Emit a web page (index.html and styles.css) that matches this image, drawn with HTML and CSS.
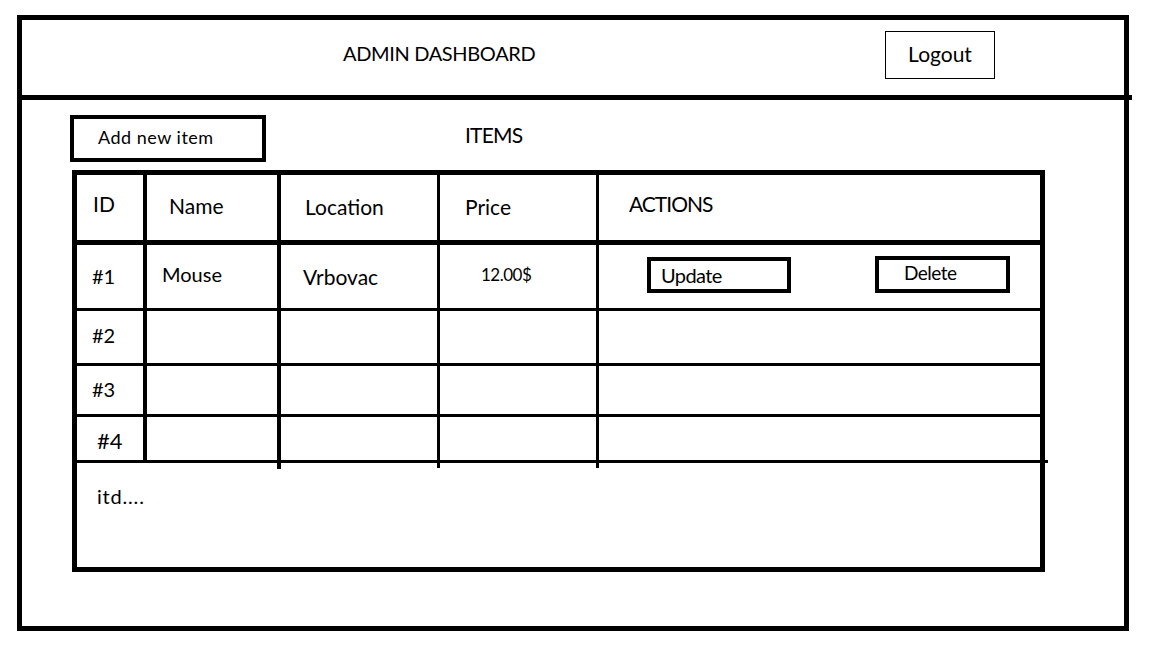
FILE: index.html
```html
<!DOCTYPE html>
<html lang="en">
<head>
<meta charset="utf-8">
<title>Admin Dashboard</title>
<link rel="stylesheet" href="styles.css">
</head>
<body>
<div class="frame">
  <header class="topbar">
    <h1 class="title">ADMIN DASHBOARD</h1>
    <button class="logout">Logout</button>
  </header>
  <main class="content">
    <div class="toolbar">
      <button class="add-btn">Add new item</button>
      <h2 class="section-title">ITEMS</h2>
    </div>
    <div class="table">
      <div class="row head">
        <div class="cell c-id p-id">ID</div>
        <div class="cell c-name p-name">Name</div>
        <div class="cell c-loc p-loc">Location</div>
        <div class="cell c-price p-price">Price</div>
        <div class="cell c-act p-act">ACTIONS</div>
      </div>
      <div class="row r1">
        <div class="cell c-id p-num">#1</div>
        <div class="cell c-name p-mouse">Mouse</div>
        <div class="cell c-loc p-vrb">Vrbovac</div>
        <div class="cell c-price p-amount">12.00$</div>
        <div class="cell c-act actions">
          <button class="btn-update">Update</button>
          <button class="btn-delete">Delete</button>
        </div>
      </div>
      <div class="row r2">
        <div class="cell c-id p-num">#2</div>
        <div class="cell c-name"></div>
        <div class="cell c-loc"></div>
        <div class="cell c-price"></div>
        <div class="cell c-act"></div>
      </div>
      <div class="row r3">
        <div class="cell c-id p-num">#3</div>
        <div class="cell c-name"></div>
        <div class="cell c-loc"></div>
        <div class="cell c-price"></div>
        <div class="cell c-act"></div>
      </div>
      <div class="row r4">
        <div class="cell c-id p-num4">#4</div>
        <div class="cell c-name stub"></div>
        <div class="cell c-loc stub"></div>
        <div class="cell c-price stub"></div>
        <div class="cell c-act"></div>
      </div>
      <div class="foot">itd....</div>
    </div>
  </main>
</div>
</body>
</html>
```

FILE: styles.css
```css
* { box-sizing: border-box; }

html, body {
  margin: 0;
  padding: 0;
  background: #fff;
}

body {
  font-family: Lato, "Liberation Sans", sans-serif;
  color: #000;
  font-size: 20px;
  line-height: 24px;
}

button {
  font-family: inherit;
  color: #000;
  background: #fff;
  margin: 0;
  cursor: pointer;
}

.frame {
  margin: 15px 0 0 17px;
  width: 1112px;
  height: 616px;
  border: 5px solid #000;
  display: flex;
  flex-direction: column;
}

.topbar {
  position: relative;
  height: 80px;
  border-bottom: 5px solid #000;
  display: flex;
  align-items: flex-start;
}

/* hand-drawn overshoot of the header divider */
.topbar::after {
  content: "";
  position: absolute;
  right: -8px;
  bottom: -5px;
  width: 8px;
  height: 5px;
  background: #000;
}

.title {
  margin: 0;
  padding: 21px 0 0 321px;
  font-size: 20px;
  line-height: 24px;
  font-weight: normal;
  letter-spacing: -0.35px;
}

.logout {
  margin: 11px 129px 0 auto;
  width: 110px;
  height: 48px;
  border: 1px solid #000;
  padding: 0 0 4px;
  font-size: 21px;
  line-height: 25px;
  text-align: center;
}

.content {
  flex: 1;
  padding-top: 15px;
}

.toolbar {
  display: flex;
  align-items: flex-start;
  margin-left: 48px;
  height: 47px;
}

.add-btn {
  width: 196px;
  height: 47px;
  border: 4px solid #000;
  padding: 0 0 4px 24px;
  font-size: 18px;
  line-height: 22px;
  letter-spacing: 0.5px;
  text-align: left;
}

.section-title {
  margin: 7px 0 0 199px;
  font-size: 21px;
  line-height: 25px;
  font-weight: normal;
  letter-spacing: -0.8px;
}

.table {
  margin: 8px 0 0 50px;
  width: 973px;
  height: 402px;
  border: 5px solid #000;
  display: flex;
  flex-direction: column;
}

.row {
  display: grid;
  grid-template-columns: 70px 134px 159px 159px 1fr;
  border-bottom: 3px solid #000;
}

.head { height: 70px; border-bottom-width: 5px; font-size: 21px; line-height: 25px; }
.r1 { height: 66px; }
.r2 { height: 55px; }
.r3 { height: 51px; }
.r4 { height: 46px; position: relative; }

/* hand-drawn overshoot of the last row line */
.r4::after {
  content: "";
  position: absolute;
  right: -8px;
  bottom: -3px;
  width: 8px;
  height: 3px;
  background: #000;
}

.cell { white-space: nowrap; }
.c-id { border-right: 4px solid #000; }
.c-name { border-right: 4px solid #000; }
.c-loc { border-right: 3px solid #000; }
.c-price { border-right: 3px solid #000; }

/* column lines poking below the last row */
.stub { position: relative; }
.stub::after {
  content: "";
  position: absolute;
  bottom: -9px;
  right: -4px;
  width: 4px;
  height: 9px;
  background: #000;
}
.c-loc.stub::after, .c-price.stub::after { right: -3px; width: 3px; bottom: -8px; height: 8px; }

/* header texts */
.p-id { padding: 16px 0 0 16px; }
.p-name { padding: 18px 0 0 22px; }
.p-loc { padding: 19px 0 0 24px; }
.p-price { padding: 19px 0 0 25px; }
.p-act { padding: 16px 0 0 30px; letter-spacing: -1px; }

/* row texts */
.p-num { padding-left: 15px; }
.r1 .p-num { padding-top: 19px; }
.r2 .p-num { padding-top: 12px; }
.r3 .p-num { padding-top: 11px; }
.p-num4 { padding: 11px 0 0 20px; font-size: 22px; line-height: 26px; }
.p-mouse { padding: 17px 0 0 15px; }
.p-vrb { padding: 19px 0 0 22px; font-size: 21px; line-height: 25px; }
.p-amount { padding: 20px 0 0 41px; font-size: 17px; line-height: 20px; letter-spacing: -0.5px; }

.actions {
  display: flex;
  align-items: flex-start;
  padding: 12px 0 0 48px;
}

.btn-update {
  width: 144px;
  height: 36px;
  border: 4px solid #000;
  padding: 0 0 0 10px;
  font-size: 20px;
  line-height: 24px;
  letter-spacing: -0.6px;
  text-align: left;
}

.btn-delete {
  width: 135px;
  height: 37px;
  margin: -1px 0 0 84px;
  border: 4px solid #000;
  padding: 0 0 4px 25px;
  font-size: 19px;
  line-height: 23px;
  letter-spacing: -0.5px;
  text-align: left;
}

.foot {
  flex: 1;
  padding: 21px 0 0 20px;
  letter-spacing: 0.8px;
}
```
